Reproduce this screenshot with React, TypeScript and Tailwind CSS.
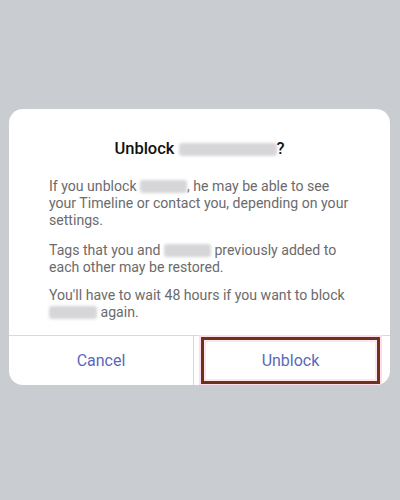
function Blur({ w }: { w: number }) {
  return (
    <span
      className="inline-block h-[13px] align-[-2px] rounded-[3px] bg-[#d6d6d8] blur-[1.5px]"
      style={{ width: w }}
    />
  );
}

export default function App() {
  return (
    <div
      className="w-[400px] h-[500px] bg-[#c9ccd1] pt-[109px] px-[9px]"
      style={{ fontFamily: 'Roboto, "Noto Sans", sans-serif' }}
    >
      <div className="w-[381px] h-[276px] bg-white rounded-[14px] overflow-hidden flex flex-col">
        <div className="pt-[29px] px-[40px] pb-[14px] flex-1">
          <h2 className="text-center text-[16.5px] leading-[22px] font-medium text-[#111]">
            Unblock <Blur w={98} />?
          </h2>
          <div className="mt-[18px] text-[14.1px] leading-[17px] text-[#6b6b6d] whitespace-nowrap">
            <p>
              If you unblock <Blur w={47} />, he may be able to see
              <br />
              your Timeline or contact you, depending on your
              <br />
              settings.
            </p>
            <p className="mt-[13px]">
              Tags that you and <Blur w={47} /> previously added to
              <br />
              each other may be restored.
            </p>
            <p className="mt-[11px]">
              You'll have to wait 48 hours if you want to block
              <br />
              <Blur w={48} /> again.
            </p>
          </div>
        </div>
        <div className="h-[50px] border-t border-[#d9d9db] flex">
          <div className="w-[184px] flex items-center justify-center text-[16px] text-[#5a69b8]">
            Cancel
          </div>
          <div className="flex-1 border-l border-[#f4c8dc] pl-[7px] pr-[10px] pt-[1px] pb-[1px]">
            <div className="h-full border-[3px] border-[#6b3418] shadow-[0_0_0_2px_#ffdcec,inset_0_0_0_2px_#ffe4f0] flex items-center justify-center text-[16px] text-[#5a69b8]">
              Unblock
            </div>
          </div>
        </div>
      </div>
    </div>
  );
}
